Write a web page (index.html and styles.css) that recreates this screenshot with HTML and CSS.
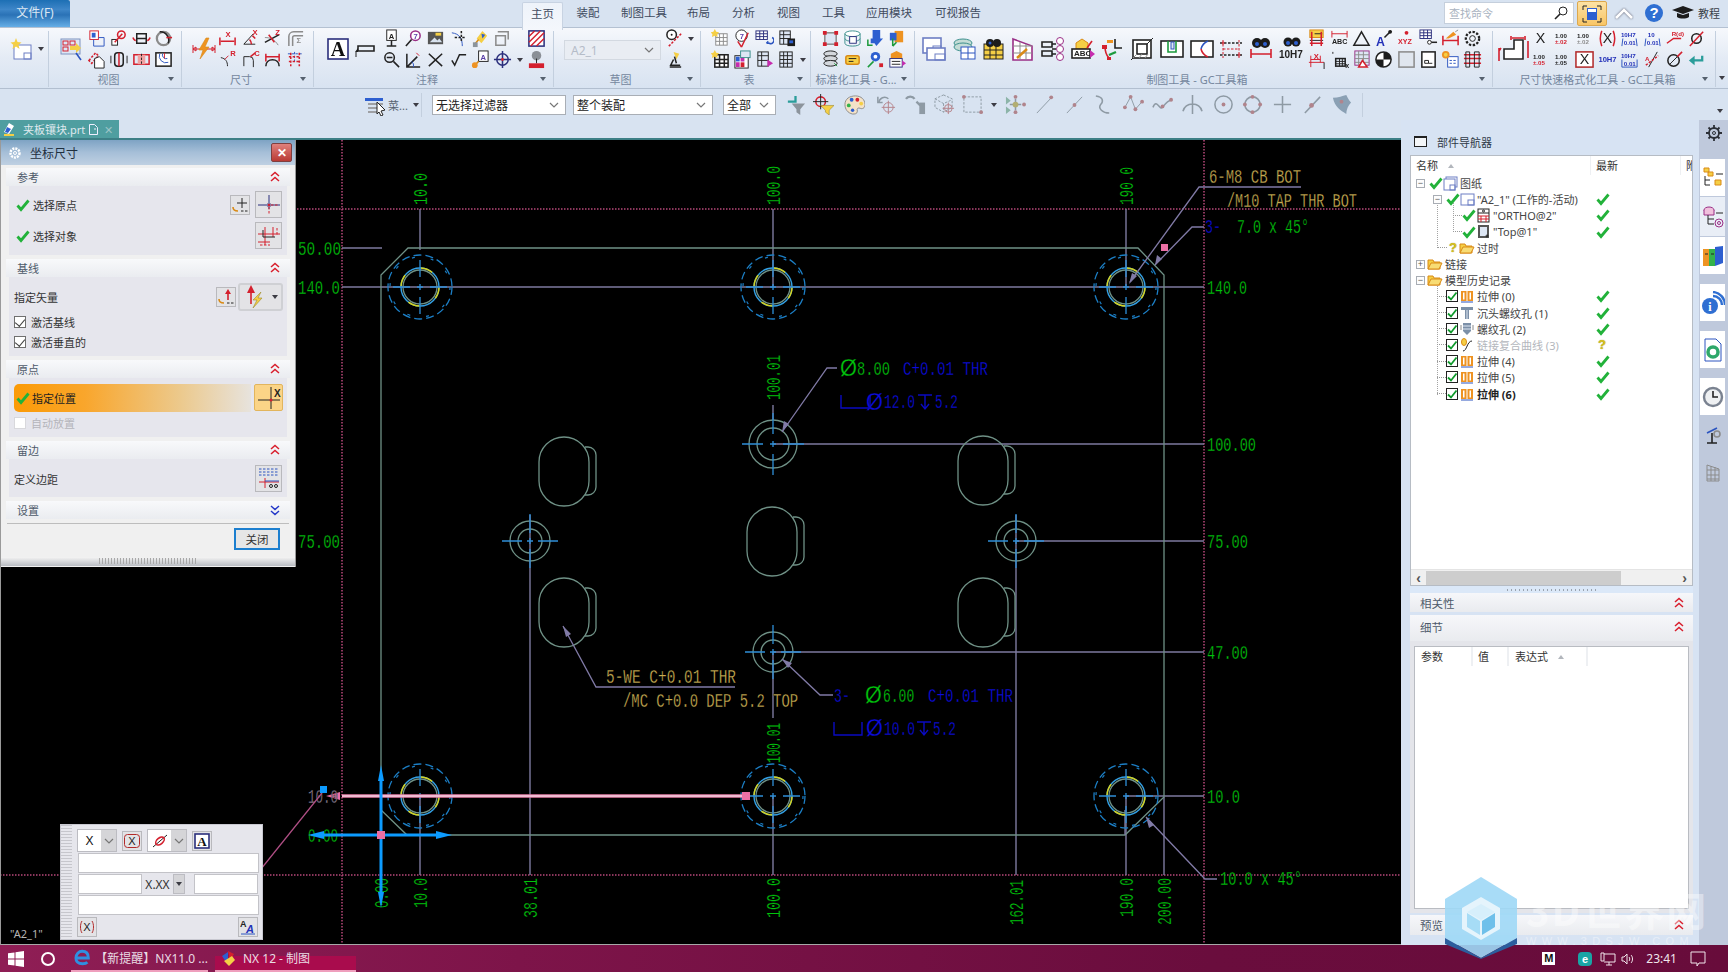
FILE: index.html
```html
<!DOCTYPE html>
<html lang="zh">
<head>
<meta charset="utf-8">
<title>NX 12 - 制图</title>
<link rel="stylesheet" href="styles.css">
</head>
<body>
<svg class="defs" width="0" height="0">
<defs>
<symbol id="chk" viewBox="0 0 14 14"><path class="chkp" d="M1.5 7.5 5 11.5 12.5 2.5"/></symbol>
<symbol id="cbx" viewBox="0 0 12 12"><rect class="k fw" x=".5" y=".5" width="11" height="11"/><path class="chkt" d="M2 6.5 5 9.5 10.5 2.5"/></symbol>
<symbol id="fold" viewBox="0 0 16 14"><path class="o fy" d="M1 12V3h5l1 2h6v7z"/><path class="o fo2" d="M1 12 4 6h11l-3 6z"/></symbol>
<symbol id="ext" viewBox="0 0 14 14"><path class="fo" d="M1 2h5.500v10H1zM7.500 2H13v10H7.500z"/><path class="fw" d="M3 3.500h1.500v7H3zM9.500 3.500H11v7H9.500z"/><path class="b" d="M1 13h12"/></symbol>
<symbol id="ddn" viewBox="0 0 10 10"><path class="chv" d="M1 3l4 4 4-4"/></symbol>
<symbol id="cup" viewBox="0 0 10 12"><path class="cr" d="M1 5 5 1.500 9 5M1 10 5 6.500 9 10"/></symbol>
<symbol id="cdn" viewBox="0 0 10 12"><path class="cb2" d="M1 2 5 5.500 9 2M1 7 5 10.500 9 7"/></symbol>
<g id="hb">
<circle class="dash1" r="32"/><circle class="dash2" r="30"/>
<circle class="ring-b" r="19"/><circle class="ring-y" r="19"/><circle class="ring-g" r="17"/>
<path class="cl" d="M-27 0H-10M-3 0H3M10 0H27M0 -27V-10M0 -3V3M0 10V27"/>
</g>
<g id="hm"><circle class="ring-g" r="24"/><circle class="ring-g" r="16"/><path class="cl" d="M-31 0H-10M-3 0H3M10 0H31M0 -31V-10M0 -3V3M0 10V31"/></g>
<g id="hs"><circle class="ring-g" r="20"/><circle class="ring-g" r="12"/><path class="cl" d="M-28 0H-8M-3 0H3M8 0H28M0 -27V-8M0 -3V3M0 8V27"/></g>
<g id="pk"><rect class="ring-g" width="50" height="69" rx="25" ry="25"/><path class="ring-g" d="M46 10h3a8 8 0 0 1 8 8v32a8 8 0 0 1-8 8h-3"/></g>
</defs>
</svg>

<header class="tabs">
  <div class="filebtn">文件(F)</div>
  <nav class="tablist">
    <span class="tab on">主页</span><span class="tab t1">装配</span><span class="tab t2">制图工具</span><span class="tab t3">布局</span><span class="tab t3">分析</span><span class="tab t3">视图</span><span class="tab t3">工具</span><span class="tab t4">应用模块</span><span class="tab t4">可视报告</span>
  </nav>
  <div class="search"><span>查找命令</span><svg width="16" height="16" viewBox="0 0 16 16"><circle class="k" cx="10" cy="6" r="4"/><path class="k w2" d="M7 9 2 14"/></svg></div>
  <div class="fullbtn"><svg width="20" height="18" viewBox="0 0 20 18"><rect class="fb" x="5" y="3" width="10" height="12"/><rect class="fw" x="6" y="4" width="8" height="3"/><path class="k" d="M1 5V1h4M15 1h4v4M19 13v4h-4M5 17H1v-4"/></svg></div>
  <svg class="cupw" width="20" height="14" viewBox="0 0 20 14"><path class="whitech" d="M2 11 10 3l8 8"/></svg>
  <svg class="help" width="20" height="20" viewBox="0 0 20 20"><circle class="fb2" cx="10" cy="10" r="9"/><text class="helpq" x="10" y="15">?</text></svg>
  <svg class="cap" width="22" height="14" viewBox="0 0 22 14"><path class="fk" d="M0 4 11 0l11 4-11 4zM5 7v4c3 2 9 2 12 0V7l-6 2z"/></svg>
  <span class="jc">教程</span>
</header>

<section class="ribbon">
  <div class="grp g-new"><div class="ics">
    <svg class="big" viewBox="0 0 24 24"><rect class="n fw" x="4" y="8" width="17" height="14"/><rect class="n" x="14" y="16" width="7" height="6"/><path class="fy" d="M6 1l1.500 4 4 .5-3 2.500 1 4-3.500-2.500-3.500 2.500 1-4-3-2.500 4-.5z"/></svg><i class="dd big-dd"></i>
  </div><div class="lbl"></div></div>

  <div class="grp g-view"><div class="ics">
    <svg class="big" viewBox="0 0 24 24"><rect class="l fl" x="1" y="2" width="19" height="15"/><rect class="r" x="3" y="4" width="5" height="4"/><rect class="r" x="10" y="4" width="5" height="4"/><rect class="r" x="3" y="10" width="5" height="4"/><path class="fy" d="M10 9h6v-3l5 5-5 5v-3h-6z"/><path class="b w2" d="M16 16l5 7"/></svg>
    <svg viewBox="0 0 20 20"><rect class="r fw" x="3" y="2" width="9" height="9"/><rect class="fb" x="5" y="4" width="4" height="5"/><path class="b" d="M12 9h6v9H7v-7"/></svg>
    <svg viewBox="0 0 20 20"><rect class="k fw" x="3" y="11" width="6" height="6"/><circle class="r w2" cx="13" cy="6" r="4"/><path class="r w2" d="M6 14 14 5"/></svg>
    <svg viewBox="0 0 20 20"><path class="k w2" d="M5 5h10v10H5zM5 10h10"/><path class="r w2" d="M1 9c1 3 2 3 3 3M19 9c-1 3-2 3-3 3"/></svg>
    <svg viewBox="0 0 20 20"><circle class="g w3" cx="10" cy="10" r="7"/><path class="k w2" d="M6 3a9 9 0 0 1 9 12"/><path class="r w2" d="M13 9h6"/></svg>
    <svg viewBox="0 0 20 20"><path class="r w2 dsh" d="M2 11 9 3l3 3-7 8z"/><path class="k fw" d="M8 9l5-2 5 5v7H8z"/></svg>
    <svg viewBox="0 0 20 20"><rect class="k w2" x="6" y="3" width="9" height="14" rx="3"/><path class="k" d="M2 6v8M19 6v8"/><path class="r w2" d="M10.500 3v14"/></svg>
    <svg viewBox="0 0 20 20"><rect class="r w2" x="2" y="5" width="16" height="10"/><path class="fr2" d="M6 5h8v10H6z"/><path class="k dsh" d="M10 4v12"/></svg>
    <svg viewBox="0 0 20 20"><rect class="k w2 fw" x="2" y="3" width="16" height="14"/><path class="b" d="M6 4a7 7 0 0 0 9 9M9 4a4 4 0 0 0 5 5"/><path class="r" d="M11 3v6"/></svg>
  </div><div class="lbl"><span>视图</span><i class="dd"></i></div></div>

  <div class="grp g-dim"><div class="ics">
    <svg class="big" viewBox="0 0 24 24"><path class="r" d="M1 8v8M23 8v8M1 12h22M1 12l3-2v4zM23 12l-3-2v4z"/><path class="fo sk" d="M14 1 7 13h4l-3 9 9-12h-4l4-9z"/></svg>
    <svg viewBox="0 0 20 20"><path class="r w2" d="M2 9v8M18 9v8M3 13h14"/><text class="it r-t" x="8" y="8">X</text></svg>
    <svg viewBox="0 0 20 20"><path class="k" d="M3 16 13 5M3 16h12"/><path class="r w2" d="M12 7l3 3M9 11a7 7 0 0 1 2 5"/><text class="it r-t" x="12" y="6">X</text></svg>
    <svg viewBox="0 0 20 20"><path class="k w2" d="M2 14 17 6"/><path class="g" d="M2 9c6 0 10 2 14 8"/><path class="r w2" d="M6 6l6 8"/><text class="it r-t" x="13" y="6">Z</text></svg>
    <svg viewBox="0 0 20 20"><path class="g w2" d="M3 18V8a5 5 0 0 1 5-5h10M7 18V9a2 2 0 0 1 2-2h9"/><text class="it g-t" x="11" y="15">Σ</text></svg>
    <svg viewBox="0 0 20 20"><path class="k" d="M3 8c5 1 7 4 7 9"/><path class="r" d="M7 10l4-4"/><text class="it r-t" x="13" y="6">R</text></svg>
    <svg viewBox="0 0 20 20"><path class="k" d="M3 7h6a4 4 0 0 1 4 4v7M3 7v10"/><path class="r w2" d="M10 7l5-4"/><text class="it r-t" x="14" y="6">C</text></svg>
    <svg viewBox="0 0 20 20"><path class="k w2" d="M3 17c0-9 14-9 14 0"/><path class="r w2" d="M3 4v8M17 4v8M3 7h14"/></svg>
    <svg viewBox="0 0 20 20"><path class="b dsh" d="M2 4h16M9 2v12"/><path class="r w2 dsh" d="M3 7h12M3 12h12M5 3v14M14 3v14"/></svg>
  </div><div class="lbl"><span>尺寸</span><i class="dd"></i></div></div>

  <div class="grp g-note"><div class="ics">
    <svg class="big" viewBox="0 0 24 24"><rect class="nv w2 fw" x="2" y="2" width="20" height="20"/><text class="bigA" x="12" y="19">A</text></svg>
    <svg class="big" viewBox="0 0 24 24"><path class="k w2" d="M5 9h16v5H5z"/><path class="fk" d="M2 15l3-4v4z"/><path class="k" d="M3 15v5"/></svg>
    <svg viewBox="0 0 20 20"><rect class="k fw" x="5" y="1" width="10" height="11"/><text class="it k-t" x="7" y="10">A</text><path class="k w2" d="M10 12v5M5 18h10"/></svg>
    <svg viewBox="0 0 20 20"><circle class="v w2 fw" cx="12" cy="7" r="5"/><text class="it v-t" x="10" y="10">7</text><path class="k w2" d="M8 11 2 18"/></svg>
    <svg viewBox="0 0 20 20"><rect class="fk2" x="2" y="3" width="16" height="13"/><path class="fy" d="M10 4h6v3h-6z"/><path class="fl2" d="M4 14l5-5 3 3 2-2 3 4z"/></svg>
    <svg viewBox="0 0 20 20"><path class="b" d="M3 4c8 1 11 6 11 14"/><path class="k w2 dsh" d="M6 9h12M13 2v12"/></svg>
    <svg viewBox="0 0 20 20"><path class="fy" d="M6 10l6-8 5 5-6 8z"/><path class="fb" d="M11 5l4 1-3 4z"/><path class="or w2" d="M3 17l5-6"/><path class="fg2" d="M2 14h5v5H2z"/></svg>
    <svg viewBox="0 0 20 20"><path class="g w2" d="M5 3h11v8M3 7h10v10H3z"/></svg>
    <i class="blank"></i>
    <svg viewBox="0 0 20 20"><rect class="nv w2 fw" x="2" y="2" width="16" height="16"/><path class="hat" d="M2 8 8 2M2 14 14 2M4 18 18 4M10 18l8-8"/></svg>
    <svg viewBox="0 0 20 20"><circle class="k w2" cx="8" cy="8" r="5"/><path class="k w2" d="M12 12l6 6M5 8h6"/></svg>
    <svg viewBox="0 0 20 20"><path class="k w2" d="M3 4v14h14M3 18 14 7"/><path class="b" d="M8 12a6 6 0 0 1 2 6"/><path class="r" d="M13 3l3 3"/></svg>
    <svg viewBox="0 0 20 20"><path class="k w2" d="M3 4l14 13M17 4 3 17"/></svg>
    <svg viewBox="0 0 20 20"><path class="k w2" d="M3 11l3 5 5-11h7"/></svg>
    <svg viewBox="0 0 20 20"><rect class="k fw" x="8" y="1" width="10" height="11"/><text class="it v-t" x="10" y="10">A</text><path class="or w2" d="M2 18l6-6"/><circle class="fo" cx="4" cy="16" r="3"/></svg>
    <svg viewBox="0 0 20 20"><circle class="nv w2" cx="10" cy="10" r="6"/><path class="nv w2" d="M1 10h18M10 1v18"/><circle class="fr" cx="10" cy="10" r="1.500"/></svg>
    <i class="dd"></i>
    <svg viewBox="0 0 20 20"><circle class="fg3" cx="10" cy="6" r="5"/><path class="k" d="M10 9v5"/><path class="fr" d="M2 14h16v5H2z"/></svg>
  </div><div class="lbl"><span>注释</span><i class="dd"></i></div></div>

  <div class="grp g-sk"><div class="ics">
    <div class="combo"><span>A2_1</span><svg width="10" height="10"><use href="#ddn"/></svg></div>
    <svg viewBox="0 0 20 20"><circle class="k w2 fw" cx="7" cy="6" r="5"/><circle class="fk" cx="7" cy="6" r="1"/><path class="r w2 dsh" d="M4 18 17 5"/></svg><i class="dd"></i>
    <svg viewBox="0 0 20 20"><path class="fy" d="M9 2l6 2-3 6z"/><path class="k w2" d="M9 10l-3 6h10M5 18h12M10 7l2 7"/></svg><i class="blank"></i>
  </div><div class="lbl"><span>草图</span><i class="dd"></i></div></div>

  <div class="grp g-tb"><div class="ics">
    <svg viewBox="0 0 20 20"><rect class="g fw" x="5" y="5" width="12" height="12"/><path class="g" d="M5 9h12M5 13h12M9 5v12M13 5v12"/><path class="fy" d="M4 0l1.500 3 3 .5-2 2 .5 3-3-1.500-3 1.500.5-3-2-2 3-.5z"/></svg>
    <svg viewBox="0 0 20 20"><circle class="k fw" cx="9" cy="7" r="6"/><text class="it v-t" x="7" y="10">7</text><path class="r w2" d="M9 19 16 4M9 19l-4-6"/></svg>
    <svg viewBox="0 0 20 20"><rect class="nv fw" x="1" y="2" width="12" height="9"/><path class="nv" d="M1 5h12M1 8h12M5 2v9M9 2v9"/><path class="b w2" d="M18 9a3 3 0 0 1-3 6h-3M12 15l2-2"/></svg>
    <svg viewBox="0 0 20 20"><rect class="k fl" x="3" y="2" width="11" height="14"/><path class="k" d="M3 6h11M3 10h11M7 2v14"/><rect class="fk" x="11" y="10" width="8" height="8"/><rect class="fb" x="13" y="12" width="4" height="3"/></svg>
    <i class="blank"></i>
    <svg viewBox="0 0 20 20"><rect class="k w2 fw" x="4" y="5" width="14" height="13"/><path class="k w2" d="M4 10h14M4 14h14M9 5v13M14 5v13"/><path class="fy" d="M4 0l1.500 3 3 .5-2 2 .5 3-3-1.500-3 1.500.5-3-2-2 3-.5z"/></svg>
    <svg viewBox="0 0 20 20"><rect class="k fw" x="2" y="6" width="14" height="13"/><path class="fb" d="M3 7h4v5H3z"/><path class="fr" d="M8 13h4v5H8z"/><path class="fp" d="M3 13h4v5H3zM8 7h4v5H8z"/><rect class="t fl" x="8" y="1" width="10" height="7"/></svg>
    <svg viewBox="0 0 20 20"><rect class="k fl" x="3" y="2" width="11" height="15"/><path class="k" d="M3 6h11M3 11h11M7 2v15"/><path class="fp" d="M13 10l6 4-6 4z"/></svg>
    <svg viewBox="0 0 20 20"><rect class="k fl" x="3" y="2" width="13" height="16"/><path class="k" d="M3 6h13M3 10h13M3 14h13M7 2v16M11 2v16"/></svg>
    <i class="dd"></i>
  </div><div class="lbl"><span>表</span><i class="dd"></i></div></div>

  <div class="grp g-st"><div class="ics">
    <svg viewBox="0 0 20 20"><rect class="g w2 fl" x="4" y="4" width="12" height="12"/><path class="fr" d="M2 2h4v4H2zM14 2h4v4h-4zM2 14h4v4H2zM14 14h4v4h-4z"/></svg>
    <svg viewBox="0 0 20 20"><ellipse class="t fw" cx="10" cy="5" rx="8" ry="3"/><path class="t" d="M2 5v10c0 4 16 4 16 0V5M2 10c0 4 16 4 16 0"/><rect class="nv fw" x="7" y="8" width="7" height="7"/></svg>
    <svg viewBox="0 0 20 20"><path class="fb" d="M8 1h8v9h3l-7 8-2-3H6v-5h2z"/><path class="gn w2" d="M3 11v6h5"/></svg>
    <svg viewBox="0 0 20 20"><path class="fo" d="M8 2h9v12H8z"/><path class="fb" d="M3 4h7v8H3z"/><path class="gn w2" d="M6 10v8M6 18l4-4"/></svg>
    <svg viewBox="0 0 20 20"><ellipse class="k fg4" cx="10" cy="4" rx="7" ry="3"/><ellipse class="k fg4" cx="10" cy="9" rx="7" ry="3"/><ellipse class="k fg4" cx="10" cy="14" rx="7" ry="3"/><path class="gn" d="M14 14l3 3"/></svg>
    <svg viewBox="0 0 20 20"><rect class="or w2 fy" x="3" y="6" width="14" height="9" rx="2"/><path class="k" d="M6 9h8M6 12h5"/></svg>
    <svg viewBox="0 0 20 20"><path class="gn w2" d="M3 18l6-6"/><circle class="fb" cx="11" cy="7" r="5"/><circle class="fw" cx="11" cy="7" r="2"/><path class="fr" d="M15 14h4v4h-4z"/></svg>
    <svg viewBox="0 0 20 20"><path class="fo" d="M4 4l6-3 6 3v5H4z"/><rect class="nv fw" x="3" y="9" width="13" height="9"/><path class="k" d="M5 12h9M5 15h9"/><path class="fp" d="M16 11l4 3-4 3z"/></svg>
  </div><div class="lbl"><span>标准化工具 - G...</span><i class="dd"></i></div></div>

  <div class="grp g-gc"><div class="ics">
    <svg class="big" viewBox="0 0 24 24"><rect class="n w2 fw" x="1" y="1" width="18" height="15"/><rect class="n" x="11" y="9" width="8" height="7"/><rect class="n w2 fw" x="5" y="11" width="18" height="12"/><rect class="n" x="13" y="17" width="10" height="6"/></svg>
    <svg class="big" viewBox="0 0 24 24"><ellipse class="t fg5" cx="11" cy="6" rx="9" ry="4"/><ellipse class="t fg5" cx="11" cy="10" rx="9" ry="4"/><rect class="b fw" x="9" y="10" width="14" height="12"/><path class="b" d="M9 16h14M16 10v12"/></svg>
    <svg class="big" viewBox="0 0 24 24"><rect class="k fy" x="3" y="7" width="19" height="15"/><path class="k" d="M3 13h19M3 18h19M9 7v15M15 7v15"/><circle class="fk" cx="9" cy="6" r="4"/><circle class="fk" cx="16" cy="6" r="4"/><circle class="fb" cx="9" cy="6" r="1.500"/></svg>
    <svg class="big" viewBox="0 0 24 24"><path class="v w2 fw" d="M2 2l19 7v14H2z"/><path class="g" d="M2 9h19M2 16h19M9 5v18M15 7v16"/><path class="or w3" d="M6 21l10-9"/></svg>
    <svg class="big" viewBox="0 0 24 24"><path class="k w2" d="M1 5h10v5H1zM1 14h10v5H1zM11 7h4M11 12h4M11 17h4"/><circle class="v fw" cx="19" cy="4" r="3.500"/><circle class="v fw" cx="19" cy="12" r="3.500"/><circle class="v fw" cx="19" cy="20" r="3.500"/></svg>
    <svg class="big" viewBox="0 0 24 24"><path class="or fy" d="M5 6l6-4 6 4v6H5z"/><rect class="k w2 fw" x="1" y="12" width="18" height="9"/><text class="it k-t" x="3" y="19">ABC</text><path class="fp" d="M19 13l5 4-5 4z"/><path class="r w2" d="M16 11l5-7"/></svg>
    <svg class="big" viewBox="0 0 24 24"><path class="r w2" d="M5 9c0 6 1 9 4 12"/><path class="k w2" d="M15 2v9h7"/><path class="fo" d="M7 3h6v3H7z"/><path class="gn w3" d="M9 18l7-3"/><path class="fr" d="M2 8h5v4H2zM7 20h4v3H7z"/></svg>
    <svg class="big" viewBox="0 0 24 24"><rect class="k w2 fw" x="3" y="3" width="18" height="18"/><path class="k" d="M1 23 23 1" /><rect class="k w2 fw" x="7" y="7" width="10" height="10"/><path class="g" d="M3 21l4-4M9 21l3-4M15 21l3-4"/></svg>
    <svg class="big" viewBox="0 0 24 24"><rect class="k w2 fw" x="1" y="4" width="22" height="16"/><path class="gn w2" d="M8 4v11h8V4"/><rect class="b fl" x="11" y="5" width="3" height="7"/></svg>
    <svg class="big" viewBox="0 0 24 24"><rect class="k w2 fw" x="1" y="4" width="22" height="16"/><path class="b w2" d="M18 4a12 12 0 0 0-7 8"/><path class="r w2" d="M11 12a12 12 0 0 0 7 8"/></svg>
    <svg class="big" viewBox="0 0 24 24"><path class="r dsh" d="M4 3v18M20 3v18M4 12h16"/><path class="k w2 dsh" d="M1 6h22M1 18h22"/><circle class="r" cx="4" cy="6" r="1"/><circle class="r" cx="20" cy="18" r="1"/></svg>
    <svg class="big" viewBox="0 0 24 24"><circle class="fk" cx="8" cy="6" r="5"/><circle class="fk" cx="16" cy="6" r="5"/><circle class="fb" cx="8" cy="7" r="2"/><circle class="fb" cx="16" cy="7" r="2"/><path class="r w2" d="M2 12v9M22 12v9M2 17h20"/></svg>
    <svg class="big" viewBox="0 0 24 24"><circle class="fk" cx="9" cy="5" r="4.500"/><circle class="fk" cx="17" cy="5" r="4.500"/><circle class="fb" cx="9" cy="6" r="2"/><circle class="fb" cx="17" cy="6" r="2"/><text class="txt10" x="0" y="21">10H7</text></svg>
    <svg viewBox="0 0 20 20"><rect class="or fy" x="3" y="1" width="14" height="8"/><path class="k" d="M3 12h14M8 5h8"/><path class="r w2" d="M5 3v15M15 3v15M3 15h14"/></svg>
    <svg viewBox="0 0 20 20"><path class="r" d="M2 2v7M18 2v7M2 5h16"/><text class="tiny k-t" x="2" y="16">ABC</text></svg>
    <svg viewBox="0 0 20 20"><path class="k w2" d="M10 3 18 17H2z"/></svg>
    <svg viewBox="0 0 20 20"><path class="k w2" d="M11 9 18 2"/><circle class="fk" cx="17" cy="3" r="2"/><text class="it2 b-t" x="2" y="18">A</text></svg>
    <svg viewBox="0 0 20 20"><circle class="fr" cx="10" cy="4" r="2"/><text class="tiny r-t" x="1" y="16">XYZ</text></svg>
    <svg viewBox="0 0 20 20"><rect class="nv fw" x="1" y="1" width="12" height="9"/><path class="nv" d="M1 4h12M1 7h12M5 1v9M9 1v9"/><path class="k w2" d="M12 14h7"/><circle class="k fw" cx="11" cy="14" r="2"/></svg>
    <svg viewBox="0 0 20 20"><path class="r w2" d="M2 7v10M18 7v10M2 12h16"/><path class="fo" d="M5 10l8-7 3 3-8 4z"/><path class="g" d="M15 3l3-2"/></svg>
    <svg viewBox="0 0 20 20"><circle class="k w3 dsh2" cx="10" cy="10" r="7"/><circle class="k" cx="10" cy="10" r="3"/></svg>
    <svg viewBox="0 0 20 20"><path class="r" d="M4 6v12M2 13h16M14 6v7M4 10h10"/><path class="k" d="M18 13v7"/><text class="it r-t" x="7" y="9">X</text></svg>
    <svg viewBox="0 0 20 20"><rect class="k w2" x="6" y="9" width="10" height="8"/><path class="k" d="M6 12h10M6 14.500h10M10 9v8M13 9v8"/><path class="k" d="M3 2v2"/><text class="tiny k-t" x="16" y="19">x</text></svg>
    <svg viewBox="0 0 20 20"><rect class="v fl" x="3" y="1" width="15" height="15"/><path class="g" d="M3 5h15M3 9h15M3 13h15M7 1v15M12 1v15"/><path class="r w2 fw" d="M11 11l5 7H7z"/></svg>
    <svg viewBox="0 0 20 20"><circle class="k w2 fw" cx="10" cy="10" r="8"/><path class="fk" d="M10 2a8 8 0 0 1 8 8h-8zM10 18a8 8 0 0 1-8-8h8z"/></svg>
    <svg viewBox="0 0 20 20"><rect class="g w2 fl2b" x="2" y="2" width="16" height="16"/></svg>
    <svg viewBox="0 0 20 20"><rect class="k w2 fw" x="3" y="2" width="14" height="16"/><path class="k" d="M6 11h4v3h-4z"/><path class="k" d="M10 14h4"/></svg>
    <svg viewBox="0 0 20 20"><rect class="b fw" x="7" y="7" width="11" height="11"/><path class="b dsh" d="M9 11h7M9 14h7"/><circle class="fo" cx="5" cy="5" r="4"/><circle class="fy" cx="5" cy="5" r="2"/></svg>
    <svg viewBox="0 0 20 20"><path class="r w2" d="M1 9h18M1 5h18M1 14h18"/><path class="k" d="M3 2v16h4V2zM12 2v16h5V2z"/></svg>
  </div><div class="lbl"><span>制图工具 - GC工具箱</span><i class="dd"></i></div></div>

  <div class="grp g-fa"><div class="ics">
    <svg class="big fa0" viewBox="0 0 32 32"><path class="k w2 fw" d="M6 16h10V7h9v19H6z"/><path class="r w2" d="M1 15v13M13 3v4M27 3v4M14 5h12M3 15l-2 3M30 8v17"/></svg>
    <svg viewBox="0 0 20 20"><text class="x-t k-t" x="10" y="15">X</text></svg>
    <svg viewBox="0 0 20 20"><text class="nm k-t" x="2" y="9">1.00</text><text class="nm r-t" x="2" y="16">±.02</text></svg>
    <svg viewBox="0 0 20 20"><text class="nm k-t" x="2" y="9">1.00</text><text class="nm g-t" x="2" y="16">±.02</text></svg>
    <svg viewBox="0 0 20 20"><path class="r w2" d="M4 2C2 7 2 13 4 18M16 2c2 5 2 11 0 16"/><text class="x-t k-t" x="10" y="15">X</text></svg>
    <svg viewBox="0 0 20 20"><text class="nm b-t" x="1" y="8">10H7</text><path class="b" d="M3 10 2 18M17 10l1 8"/><text class="nm b-t" x="4" y="17">0.01</text></svg>
    <svg viewBox="0 0 20 20"><text class="nm b-t" x="5" y="8">10</text><path class="b" d="M3 10 2 18M17 10l1 8"/><text class="nm b-t" x="4" y="17">0.01</text></svg>
    <svg viewBox="0 0 20 20"><text class="nm r-t" x="7" y="7">R(d)</text><path class="r w2" d="M2 15 9 10h8"/></svg>
    <svg viewBox="0 0 20 20"><circle class="k w2" cx="10" cy="10" r="5"/><path class="r w2" d="M3 18 17 3"/></svg>
    <svg viewBox="0 0 20 20"><text class="nm k-t" x="2" y="9">1.00</text><text class="nm r-t" x="2" y="16">±.05</text></svg>
    <svg viewBox="0 0 20 20"><text class="nm k-t" x="2" y="9">1.00</text><text class="nm k-t" x="2" y="16">±.05</text></svg>
    <svg viewBox="0 0 20 20"><rect class="br w2 fw" x="1" y="2" width="18" height="16"/><text class="x-t k-t" x="10" y="15">X</text></svg>
    <svg viewBox="0 0 20 20"><text class="nm2 b-t" x="10" y="13">10H7</text></svg>
    <svg viewBox="0 0 20 20"><text class="nm b-t" x="1" y="8">10H7</text><path class="b" d="M2 10v8h16v-8"/><text class="nm b-t" x="4" y="17">0.01</text></svg>
    <svg viewBox="0 0 20 20"><path class="k" d="M15 2 6 18"/><path class="r w2 dsh" d="M3 16 16 6"/><text class="nm r-t" x="2" y="12">A</text></svg>
    <svg viewBox="0 0 20 20"><circle class="k w2" cx="9" cy="11" r="6"/><path class="k" d="M5 15l8-8"/><path class="r w2" d="M13 7l5-5"/></svg>
    <svg viewBox="0 0 20 20"><path class="tl w3" d="M16 6v5H6"/><path class="ftl" d="M8 6v10l-6-5z"/></svg>
  </div><div class="lbl"><span>尺寸快速格式化工具 - GC工具箱</span><i class="dd"></i></div></div>
  <div class="g-end"><i class="dd"></i></div>
</section>

<section class="filterbar">
  <div class="menubtn"><svg width="22" height="22" viewBox="0 0 22 22"><path class="fb" d="M1 4h18v3H1z"/><path class="g w2" d="M4 10h15M4 14h10M4 18h10"/><path class="k fw" d="M13 8l8 8-4 1 2 4-2 1-2-4-2 2z"/></svg><span>菜...</span><i class="dd"></i></div>
  <div class="sel s1"><span>无选择过滤器</span><svg width="10" height="10"><use href="#ddn"/></svg></div>
  <div class="sel s2"><span>整个装配</span><svg width="10" height="10"><use href="#ddn"/></svg></div>
  <div class="sel s3"><span>全部</span><svg width="10" height="10"><use href="#ddn"/></svg></div>
  <div class="fic">
    <svg viewBox="0 0 22 22"><path class="fg2" d="M7 10h14l-5 6v6l-4-3v-3z"/><path class="tl w3" d="M3 8h8V2"/></svg>
    <svg viewBox="0 0 22 22"><circle class="r w2" cx="8" cy="8" r="5"/><path class="k" d="M8 0v16M0 8h16"/><path class="fy sk2" d="M8 12h14l-5 5v5l-4-3v-2z"/></svg>
    <svg viewBox="0 0 22 22"><path class="g fpal" d="M1 11C1 5 6 2 12 2c6 0 10 4 10 9 0 4-3 5-5 4s-4 0-3 3c0 3-3 3-5 3-5-1-8-5-8-10z"/><circle class="fb" cx="8" cy="6" r="2"/><circle class="fr" cx="14" cy="6" r="2"/><circle class="fy" cx="18" cy="10" r="2"/><circle class="gnf" cx="5" cy="12" r="2"/><circle class="fb" cx="9" cy="17" r="1.800"/></svg>
    <svg viewBox="0 0 22 22"><path class="g2 w2" d="M4 9a6 6 0 0 1 10-4"/><path class="g2 w2" d="M3 3v6h5"/><circle class="rp" cx="14" cy="14" r="5"/><path class="rp" d="M7 14h14M14 7v14"/></svg>
    <svg viewBox="0 0 22 22"><path class="g2 w3" d="M1 5c2-3 7-3 9 0"/><path class="g2 w3" d="M12 8l4 4"/><rect class="fg6" x="15" y="9" width="6" height="12"/></svg>
    <svg viewBox="0 0 22 22"><path class="g2 dsh" d="M10 1 19 5v9l-9 5-9-5V5zM1 5l9 5 9-4M10 10v9"/><circle class="rp" cx="15" cy="15" r="4"/><path class="rp" d="M9 15h12M15 9v12"/></svg>
    <svg viewBox="0 0 22 22"><rect class="g2 dsh" x="2" y="3" width="18" height="16"/><circle class="frp" cx="2" cy="3" r="2"/><circle class="frp" cx="20" cy="19" r="2"/></svg>
    <i class="dd"></i>
    <svg viewBox="0 0 22 22"><path class="g2 w2" d="M5 11h12M11 5v12"/><circle class="fg7" cx="11" cy="11" r="3"/><path class="ftl2" d="M1 3l5 4-5 4zM1 13l5 4-5 4z"/><circle class="frp" cx="11" cy="3" r="2"/><circle class="frp" cx="20" cy="11" r="2"/><circle class="frp" cx="11" cy="19" r="2"/></svg>
    <svg viewBox="0 0 22 22"><path class="g2" d="M3 20 19 3"/><circle class="frp" cx="18" cy="3.500" r="2"/></svg>
    <svg viewBox="0 0 22 22"><path class="g2" d="M3 20 19 3"/><circle class="frp" cx="11" cy="11.500" r="2"/></svg>
    <svg viewBox="0 0 22 22"><path class="g2 w2" d="M3 2c8 1 8 6 5 9-3 4 2 9 9 9"/></svg>
    <svg viewBox="0 0 22 22"><path class="g2" d="M2 14 8 3l5 13 7-8"/><circle class="frp" cx="8" cy="3" r="2"/><circle class="frp" cx="2" cy="14" r="2"/><circle class="frp" cx="13" cy="16" r="2"/><circle class="frp" cx="20" cy="8" r="2"/></svg>
    <svg viewBox="0 0 22 22"><path class="g2 w2" d="M1 14c4-10 7 4 10 0s5-7 10-8"/><circle class="frp" cx="11" cy="13" r="2"/><circle class="frp" cx="20" cy="6" r="2"/></svg>
    <svg viewBox="0 0 22 22"><path class="g2 w2" d="M1 18C4 8 18 8 21 18M11 1v20"/></svg>
    <svg viewBox="0 0 22 22"><circle class="g2 w2" cx="11" cy="11" r="9"/><circle class="frp" cx="11" cy="11" r="2"/></svg>
    <svg viewBox="0 0 22 22"><circle class="g2 w2" cx="11" cy="11" r="8"/><circle class="frp" cx="3" cy="11" r="2"/><circle class="frp" cx="19" cy="11" r="2"/><circle class="frp" cx="11" cy="3" r="2"/><circle class="frp" cx="11" cy="19" r="2"/></svg>
    <svg viewBox="0 0 22 22"><path class="g2 w2" d="M2 11h18M11 2v18"/></svg>
    <svg viewBox="0 0 22 22"><path class="g2 w2" d="M3 20 19 3"/><circle class="frp" cx="10" cy="12" r="2.500"/></svg>
    <svg viewBox="0 0 22 22"><path class="fg8" d="M2 4c6 0 10-2 14-3 2 4 4 7 5 8-3 3-5 8-5 12C10 17 4 14 2 4z"/><circle class="frp" cx="11" cy="8" r="2"/></svg>
  </div>
  <div class="fsep"></div>
  <i class="dd fend"></i>
</section>

<main class="work">
  <div class="left">
    <div class="docbar">
      <div class="doctab"><svg width="17" height="15" viewBox="0 0 17 15"><path class="fw" d="M6 1l5 3-5 8-5-2z"/><path class="fb" d="M4 5l4 2-3 4-3-1z"/><path class="fy" d="M1 12h10v2H1z"/></svg><span>夹板镶块.prt</span><svg width="11" height="13" viewBox="0 0 11 13"><path class="whs" d="M1.500 1.500h5l3 3v7h-8zM6 6h2"/></svg><span class="docx">✕</span></div>
    </div>
    <div class="canvas">
      <svg class="draw" width="1400" height="805" viewBox="0 140 1400 805">
        <path class="frame" d="M342 140V945M1204 140V945M0 209H1400M0 875H1400"/>
        <path class="ext" d="M420 209V250M773 209V287M1126 209V287M773 405V420M342 287H1204M342 248H382M773 444H1204M1016 541H1204M773 652H1204M1126 796H1204M420 796V875M773 796V875M1126 796V875M530 515V875M1016 515V875M1164 797V875M773 652V718"/>
        <path class="part" d="M408 248H1138L1164 275V797L1125 835H407L381 810V275Z"/>
        <path class="ext" d="M1125 810V835"/>
        <g class="pkts"><use href="#pk" x="539" y="437"/><use href="#pk" x="747" y="507"/><use href="#pk" x="958" y="436"/><use href="#pk" x="539" y="578"/><use href="#pk" x="958" y="578"/></g>
        <use href="#hb" x="420" y="287"/><use href="#hb" x="773" y="287"/><use href="#hb" x="1126" y="287"/><use href="#hb" x="420" y="796"/><use href="#hb" x="773" y="796"/><use href="#hb" x="1126" y="796"/>
        <use href="#hm" x="773" y="444"/><use href="#hs" x="773" y="652"/><use href="#hs" x="530" y="541"/><use href="#hs" x="1016" y="541"/>

        <path class="lead" d="M1301 187H1199L1130 282M1204 227H1192L1155 265M837 368H827L782 432M735 687H596L563 626M833 695H820L782 659M1217 879H1205L1146 817"/>
        <path class="ahead" d="M1129 284l3-11 5 3zM1155 265l2-10 5 4zM782 432l2-11 5 3zM563 626l8 8-5 3zM782 659l10 4-4 5zM1146 817l8 8-5 3z"/>

        <g class="gr">
          <text transform="translate(427 205) rotate(-90)" textLength="32" lengthAdjust="spacingAndGlyphs">10.0</text>
          <text transform="translate(780 205) rotate(-90)" textLength="39" lengthAdjust="spacingAndGlyphs">100.0</text>
          <text transform="translate(780 400) rotate(-90)" textLength="45" lengthAdjust="spacingAndGlyphs">100.01</text>
          <text transform="translate(1133 205) rotate(-90)" textLength="38" lengthAdjust="spacingAndGlyphs">190.0</text>
          <text transform="translate(427 908) rotate(-90)" textLength="30" lengthAdjust="spacingAndGlyphs">10.0</text>
          <text transform="translate(388 908) rotate(-90)" textLength="30" lengthAdjust="spacingAndGlyphs">0.00</text>
          <text transform="translate(537 918) rotate(-90)" textLength="40" lengthAdjust="spacingAndGlyphs">38.01</text>
          <text transform="translate(780 918) rotate(-90)" textLength="40" lengthAdjust="spacingAndGlyphs">100.0</text>
          <text transform="translate(780 763) rotate(-90)" textLength="40" lengthAdjust="spacingAndGlyphs">100.01</text>
          <text transform="translate(1023 925) rotate(-90)" textLength="45" lengthAdjust="spacingAndGlyphs">162.01</text>
          <text transform="translate(1133 917) rotate(-90)" textLength="39" lengthAdjust="spacingAndGlyphs">190.0</text>
          <text transform="translate(1171 925) rotate(-90)" textLength="47" lengthAdjust="spacingAndGlyphs">200.00</text>
          <text x="1207" y="294" textLength="40" lengthAdjust="spacingAndGlyphs">140.0</text>
          <text x="1207" y="451" textLength="49" lengthAdjust="spacingAndGlyphs">100.00</text>
          <text x="1207" y="548" textLength="41" lengthAdjust="spacingAndGlyphs">75.00</text>
          <text x="1207" y="659" textLength="41" lengthAdjust="spacingAndGlyphs">47.00</text>
          <text x="1207" y="803" textLength="33" lengthAdjust="spacingAndGlyphs">10.0</text>
          <text x="298" y="255" textLength="43" lengthAdjust="spacingAndGlyphs">50.00</text>
          <text x="298" y="294" textLength="42" lengthAdjust="spacingAndGlyphs">140.0</text>
          <text x="298" y="548" textLength="42" lengthAdjust="spacingAndGlyphs">75.00</text>
          <text x="308" y="842" textLength="30" lengthAdjust="spacingAndGlyphs">0.00</text>
          <text x="1237" y="233" textLength="72" lengthAdjust="spacingAndGlyphs">7.0 x 45°</text>
          <text x="1220" y="885" textLength="82" lengthAdjust="spacingAndGlyphs">10.0 x 45°</text>
          <text x="857" y="375" textLength="33" lengthAdjust="spacingAndGlyphs">8.00</text>
          <text transform="translate(883 702) scale(.62 1)">6.00</text>
          <text class="dia" x="840" y="376" textLength="17" lengthAdjust="spacingAndGlyphs">Ø</text>
          <text class="dia" transform="translate(865 703) scale(.9 1)">Ø</text>
        </g>
        <g class="go">
          <text x="1209" y="183" textLength="92" lengthAdjust="spacingAndGlyphs">6-M8 CB BOT</text>
          <text x="1227" y="207" textLength="130" lengthAdjust="spacingAndGlyphs">/M10 TAP THR BOT</text>
          <text x="606" y="683" textLength="130" lengthAdjust="spacingAndGlyphs">5-WE C+0.01 THR</text>
          <text transform="translate(623 707) scale(.662 1)">/MC C+0.0 DEP 5.2 TOP</text>
        </g>
        <g class="bl">
          <text x="1205" y="233" textLength="16" lengthAdjust="spacingAndGlyphs">3-</text>
          <text x="903" y="375" textLength="85" lengthAdjust="spacingAndGlyphs">C+0.01 THR</text>
          <text transform="translate(834 702) scale(.63 1)">3-</text>
          <text transform="translate(928 702) scale(.675 1)">C+0.01 THR</text>
          <text x="884" y="408" textLength="31" lengthAdjust="spacingAndGlyphs">12.0</text>
          <text x="935" y="408" textLength="23" lengthAdjust="spacingAndGlyphs">5.2</text>
          <text x="884" y="735" textLength="31" lengthAdjust="spacingAndGlyphs">10.0</text>
          <text x="933" y="735" textLength="23" lengthAdjust="spacingAndGlyphs">5.2</text>
          <text class="dia" x="866" y="410" textLength="17" lengthAdjust="spacingAndGlyphs">Ø</text>
          <text class="dia" x="866" y="736" textLength="17" lengthAdjust="spacingAndGlyphs">Ø</text>
        </g>
        <path class="bsym" d="M841 395V408H870V395M834 722V735H862V722M918 395H932M925 395V408M921 404L925 409 929 404M917 722H931M924 722V734M920 730L924 735 928 730"/>

        <path class="hi" d="M342 796H745"/>
        <path class="hi2" d="M342 796H745"/>
        <rect class="pinksq" x="742" y="792" width="8" height="8"/>
        <rect class="pinksq" x="1161" y="244" width="7" height="7"/>
        <path class="pinksq" d="M326 796 340 792V800Z"/>
        <text class="gry" x="308" y="803" textLength="30" lengthAdjust="spacingAndGlyphs">10.0</text>
        <path class="plink" d="M261 869 322 793"/>
        <rect class="bluesq" x="320" y="786" width="7" height="7"/>
        <path class="axis" d="M381 778V893M322 835H440"/>
        <path class="axh" d="M381 765l-3 16h6zM381 908l-3-16h6zM308 835l16-4v8zM452 835l-16-4v8z"/>
        <rect class="pinksq" x="377" y="831" width="8" height="8"/>
      </svg>
      <span class="sheetname">"A2_1"</span>

      <aside class="dlg">
        <div class="dlg-title"><svg width="14" height="14" viewBox="0 0 14 14"><circle class="gear" cx="7" cy="7" r="4.500"/><circle class="gear2" cx="7" cy="7" r="1.500"/></svg><span>坐标尺寸</span><button class="dlg-x">✕</button></div>
        <div class="sec-h"><span>参考</span><svg width="10" height="12"><use href="#cup"/></svg></div>
        <div class="sec-b b-ref">
          <div class="d-row h31"><svg class="c13" width="14" height="14"><use href="#chk"/></svg><span class="grow">选择原点</span>
            <span class="tbtn m"><svg width="18" height="18" viewBox="0 0 18 18"><path class="k" d="M11 2v10M6 7h10"/><path class="or w2" d="M2 11c0 3 2 4 5 4"/><path class="k dsh" d="M10 15h7"/></svg></span>
            <span class="tbtn l"><svg width="24" height="24" viewBox="0 0 24 24"><path class="nv" d="M12 2v14M1 12h22"/><circle class="fr" cx="12" cy="12" r="2"/><path class="r dsh" d="M14 12h8M12 14v8"/></svg></span></div>
          <div class="d-row h31"><svg class="c13" width="14" height="14"><use href="#chk"/></svg><span class="grow">选择对象</span>
            <span class="tbtn l"><svg width="24" height="24" viewBox="0 0 24 24"><path class="r" d="M1 10h22M8 3v18M16 3v10M1 18h12"/><path class="k" d="M6 6v7h12"/><path class="r dsh" d="M20 4v8M3 21h10"/></svg></span></div>
        </div>
        <div class="sec-h"><span>基线</span><svg width="10" height="12"><use href="#cup"/></svg></div>
        <div class="sec-b b-base">
          <div class="d-row h29 nopad"><span class="grow">指定矢量</span>
            <span class="tbtn m"><svg width="18" height="18" viewBox="0 0 18 18"><path class="r w2" d="M11 3v9"/><path class="fr" d="M11 1l-3 5h6z"/><path class="or w2" d="M2 11c0 3 2 4 5 4"/><path class="k dsh" d="M10 15h7"/></svg></span>
            <span class="tbtn split"><svg width="22" height="26" viewBox="0 0 22 26"><path class="r w2" d="M8 6v14"/><path class="fr" d="M8 1 4 9h8z"/><path class="fy sk2" d="M18 8l-8 8h4l-4 8 9-10h-4z"/></svg><i class="dd"></i></span></div>
          <label class="ck"><span class="bx on"></span>激活基线</label>
          <label class="ck"><span class="bx on"></span>激活垂直的</label>
        </div>
        <div class="sec-h"><span>原点</span><svg width="10" height="12"><use href="#cup"/></svg></div>
        <div class="sec-b b-org">
          <div class="d-row hl"><div class="pickbar"><svg width="14" height="14"><use href="#chk"/></svg><span>指定位置</span></div>
            <span class="tbtn pick"><svg width="24" height="24" viewBox="0 0 24 24"><path class="k" d="M1 14h22M14 1v22"/><circle class="fr" cx="14" cy="14" r="1.500"/><text class="pick-x" x="17" y="11">X</text></svg></span></div>
          <label class="ck off"><span class="bx"></span>自动放置</label>
        </div>
        <div class="sec-h"><span>留边</span><svg width="10" height="12"><use href="#cup"/></svg></div>
        <div class="sec-b b-marg">
          <div class="d-row nopad h28"><span class="grow">定义边距</span>
            <span class="tbtn l"><svg width="24" height="24" viewBox="0 0 24 24"><path class="b dsh" d="M2 3h20M2 6h20M2 9h20"/><path class="r" d="M8 12v10M2 16h20"/><path class="b" d="M8 15h14"/><circle class="k" cx="14" cy="20" r="1.500"/><circle class="k" cx="19" cy="20" r="1.500"/></svg></span></div>
        </div>
        <div class="sec-h"><span>设置</span><svg width="10" height="12"><use href="#cdn"/></svg></div>
        <div class="dlg-foot"><button class="closebtn">关闭</button></div>
        <div class="dlg-grip"></div>
      </aside>

      <aside class="tbox">
        <div class="grip"></div>
        <div class="tb-main">
          <div class="tb-r1">
            <span class="tcmb"><b>X</b><i><svg width="10" height="10"><use href="#ddn"/></svg></i></span>
            <span class="tbtn t20"><svg width="16" height="14" viewBox="0 0 16 14"><rect class="br" x=".5" y=".5" width="15" height="13" rx="3"/><text class="x-s" x="8" y="11">X</text></svg></span>
            <span class="tcmb"><b><svg width="18" height="16" viewBox="0 0 18 16"><path class="k" d="M2 14 16 2"/><ellipse class="r w2" cx="9" cy="8" rx="5" ry="3" transform="rotate(-40 9 8)"/></svg></b><i><svg width="10" height="10"><use href="#ddn"/></svg></i></span>
            <span class="tbtn t20"><svg width="16" height="16" viewBox="0 0 16 16"><rect class="nv w2 fw" x="1" y="1" width="14" height="14"/><text class="a-s" x="8" y="13">A</text></svg></span>
          </div>
          <div class="tinput"></div>
          <div class="tb-r3"><span class="tinput w64"></span><span class="prec">X.XX</span><i class="ddbtn"><i class="dd"></i></i><span class="tinput w64b"></span></div>
          <div class="tinput"></div>
          <div class="tb-r5">
            <span class="tbtn t20"><svg width="16" height="14" viewBox="0 0 16 14"><path class="br" d="M3 1C1 4 1 10 3 13M13 1c2 3 2 9 0 12"/><text class="x-s" x="8" y="11">X</text></svg></span>
            <span class="tbtn t20"><svg width="16" height="16" viewBox="0 0 16 16"><text class="a-x1" x="0" y="8">A</text><text class="a-x2" x="6" y="14">A</text><path class="b" d="M1 15h14"/></svg></span>
          </div>
        </div>
      </aside>
    </div>
  </div>

  <div class="nav">
    <div class="nav-head"><span class="nv-box"></span><span>部件导航器</span></div>
    <div class="tree">
      <div class="tree-cols"><span class="tc1">名称<i class="up"></i></span><span class="tc2">最新</span><span class="tc3">附</span></div>
      <div class="rows">
        <i class="vd v1"></i><i class="vd v2"></i><i class="vd v3"></i>
        <div class="row"><div class="nm-c i0"><i class="ex">−</i><svg class="ck14" width="14" height="14"><use href="#chk"/></svg><svg class="ic" width="15" height="15" viewBox="0 0 15 15"><rect class="n fw" x="3" y="1" width="11" height="10"/><rect class="n fw" x="1" y="3" width="11" height="11"/><rect class="n" x="7" y="9" width="5" height="5"/></svg><span>图纸</span></div></div>
        <div class="row"><div class="nm-c i1"><i class="ex">−</i><svg class="ck14" width="14" height="14"><use href="#chk"/></svg><svg class="ic" width="15" height="15" viewBox="0 0 15 15"><rect class="n fw" x="1" y="2" width="13" height="11"/><rect class="n" x="8" y="8" width="6" height="5"/></svg><span>"A2_1" (工作的-活动)</span></div><div class="lt"><svg width="14" height="14"><use href="#chk"/></svg></div></div>
        <div class="row"><div class="nm-c i2"><i class="dh"></i><svg class="ck14" width="14" height="14"><use href="#chk"/></svg><svg class="ic" width="15" height="15" viewBox="0 0 15 15"><rect class="k fw" x="2" y="1" width="11" height="13"/><path class="k" d="M2 5h11"/><circle class="k" cx="7.500" cy="3" r="1"/><path class="r" d="M2 8h11M2 11h11M5 8v6M10 8v6"/></svg><span>"ORTHO@2"</span></div><div class="lt"><svg width="14" height="14"><use href="#chk"/></svg></div></div>
        <div class="row"><div class="nm-c i2"><i class="dh"></i><svg class="ck14" width="14" height="14"><use href="#chk"/></svg><svg class="ic" width="15" height="15" viewBox="0 0 15 15"><rect class="fk2" x="2" y="1" width="11" height="13"/><rect class="fl" x="4" y="3" width="7" height="9"/><circle class="k" cx="11" cy="12" r="1"/></svg><span>"Top@1"</span></div><div class="lt"><svg width="14" height="14"><use href="#chk"/></svg></div></div>
        <div class="row"><div class="nm-c i3"><i class="dh"></i><span class="qm">?</span><svg class="ic" width="16" height="14"><use href="#fold"/></svg><span>过时</span></div></div>
        <div class="row"><div class="nm-c i0"><i class="ex ex2">+</i><svg class="ic" width="16" height="14"><use href="#fold"/></svg><span>链接</span></div></div>
        <div class="row"><div class="nm-c i0"><i class="ex ex2">−</i><svg class="ic" width="16" height="14"><use href="#fold"/></svg><span>模型历史记录</span></div></div>
        <div class="row"><div class="nm-c i4"><i class="dh"></i><svg class="cb12" width="12" height="12"><use href="#cbx"/></svg><svg class="ic" width="14" height="14"><use href="#ext"/></svg><span>拉伸 (0)</span></div><div class="lt"><svg width="14" height="14"><use href="#chk"/></svg></div></div>
        <div class="row"><div class="nm-c i4"><i class="dh"></i><svg class="cb12" width="12" height="12"><use href="#cbx"/></svg><svg class="ic" width="14" height="14" viewBox="0 0 14 14"><path class="fg9" d="M1 1h12v3H9v9H5V4H1z"/><path class="w-l" d="M7 4v9"/></svg><span>沉头螺纹孔 (1)</span></div><div class="lt"><svg width="14" height="14"><use href="#chk"/></svg></div></div>
        <div class="row"><div class="nm-c i4"><i class="dh"></i><svg class="cb12" width="12" height="12"><use href="#cbx"/></svg><svg class="ic" width="14" height="14" viewBox="0 0 14 14"><path class="fg9" d="M3 1h8v8l-4 4-4-4z"/><path class="g" d="M1 3v5M13 3v5"/><path class="w-l" d="M3 4h8M3 7h8"/></svg><span>螺纹孔 (2)</span></div><div class="lt"><svg width="14" height="14"><use href="#chk"/></svg></div></div>
        <div class="row dim"><div class="nm-c i4"><i class="dh"></i><svg class="cb12" width="12" height="12"><use href="#cbx"/></svg><svg class="ic" width="14" height="14" viewBox="0 0 14 14"><ellipse class="or fy" cx="4" cy="4" rx="2.500" ry="3.500"/><path class="k" d="M3 13c4 0 4-10 9-10"/></svg><span>链接复合曲线 (3)</span></div><div class="lt"><span class="qm">?</span></div></div>
        <div class="row"><div class="nm-c i4"><i class="dh"></i><svg class="cb12" width="12" height="12"><use href="#cbx"/></svg><svg class="ic" width="14" height="14"><use href="#ext"/></svg><span>拉伸 (4)</span></div><div class="lt"><svg width="14" height="14"><use href="#chk"/></svg></div></div>
        <div class="row"><div class="nm-c i4"><i class="dh"></i><svg class="cb12" width="12" height="12"><use href="#cbx"/></svg><svg class="ic" width="14" height="14"><use href="#ext"/></svg><span>拉伸 (5)</span></div><div class="lt"><svg width="14" height="14"><use href="#chk"/></svg></div></div>
        <div class="row bold"><div class="nm-c i4"><i class="dh"></i><svg class="cb12" width="12" height="12"><use href="#cbx"/></svg><svg class="ic" width="14" height="14"><use href="#ext"/></svg><span>拉伸 (6)</span></div><div class="lt"><svg width="14" height="14"><use href="#chk"/></svg></div></div>
      </div>
      <div class="hscroll"><span class="sa">‹</span><div class="track"><div class="thumb"></div></div><span class="sa">›</span></div>
    </div>
    <div class="resz"></div>
    <div class="nav-sec s-rel"><span>相关性</span><svg width="10" height="12"><use href="#cup"/></svg></div>
    <div class="nav-sec s-det"><span>细节</span><svg width="10" height="12"><use href="#cup"/></svg></div>
    <div class="detail">
      <div class="dt"><div class="dt-h"><span class="d1">参数</span><span class="d2">值</span><span class="d3">表达式<i class="up"></i></span></div></div>
    </div>
    <div class="nav-sec s-pre"><span>预览</span><svg width="10" height="12"><use href="#cup"/></svg></div>
  </div>

  <div class="side">
    <svg class="sgear" width="16" height="16" viewBox="0 0 16 16"><circle class="gear3" cx="8" cy="8" r="5"/><circle class="gear3b" cx="8" cy="8" r="1.500"/><path class="gear3" d="M8 0v3M8 13v3M0 8h3M13 8h3M2.500 2.500l2 2M11.500 11.500l2 2M2.500 13.500l2-2M11.500 4.500l2-2"/></svg>
    <div class="stab"><svg width="22" height="24" viewBox="0 0 22 24"><path class="fy or" d="M2 2h5v4H2zM6 6h5v4H6z"/><path class="k" d="M3 10v9h5M14 8h7M3 14h5"/><path class="fy or" d="M13 14h6v5h-6z"/></svg></div>
    <div class="stab act"><svg width="22" height="24" viewBox="0 0 22 24"><ellipse class="v fpk" cx="7" cy="5" rx="5" ry="3"/><path class="v fpk" d="M2 5v5h10V5"/><path class="k" d="M6 10v9h6M14 8h7M6 14h6"/><circle class="v" cx="17" cy="18" r="4"/><circle class="v" cx="17" cy="18" r="1.500"/></svg></div>
    <div class="stab"><svg width="22" height="24" viewBox="0 0 22 24"><path class="fo" d="M1 5h6v17H1z"/><path class="gnf" d="M7 5h6v17H7z"/><path class="fb" d="M13 3l8-1v17l-8 3z"/><path class="k" d="M3 10h3M9 10h3"/></svg></div>
    <div class="stab gap"><svg width="24" height="24" viewBox="0 0 24 24"><circle class="fb2" cx="9" cy="15" r="8"/><text class="itxt" x="9" y="20">i</text><path class="bl-s" d="M12 5a9 9 0 0 1 9 9M12 1a13 13 0 0 1 12 13"/></svg></div>
    <div class="stab gap"><svg width="20" height="24" viewBox="0 0 20 24"><path class="b fw" d="M2 1h11l5 5v17H2z"/><circle class="tl-r" cx="10" cy="14" r="5"/></svg></div>
    <div class="stab gap"><svg width="22" height="22" viewBox="0 0 22 22"><circle class="clk" cx="11" cy="11" r="9"/><path class="k w2" d="M11 5v6h5"/></svg></div>
    <div class="stab small"><svg width="20" height="20" viewBox="0 0 20 20"><path class="k w2" d="M4 18h10M9 18V8"/><path class="b w2" d="M4 8l10-5"/><circle class="g w2" cx="14" cy="9" r="3"/></svg></div>
    <div class="stab small"><svg width="20" height="20" viewBox="0 0 20 20"><path class="g" d="M4 2l12 4v12H4zM4 7h12M4 12h12M4 16h12M8 3v15M12 4v14"/><path class="fpk2" d="M4 2l12 4v3H4z"/></svg></div>
  </div>
</main>

<footer class="taskbar">
  <svg class="win" width="16" height="16" viewBox="0 0 16 16"><path class="fw" d="M0 2.300 6.500 1.400V7.500H0zM7.500 1.300 16 0V7.500H7.500zM0 8.500H6.500V14.600L0 13.700zM7.500 8.500H16V16L7.500 14.700z"/></svg>
  <span class="cort"></span>
  <div class="tk t-edge"><svg width="17" height="17" viewBox="0 0 17 17"><path class="edg" d="M3 9h12C15 4 12 2 8.500 2 5 2 2 5 2 9c0 4 3 6 7 6 2 0 4-.5 5-1.500"/></svg><span>【新提醒】NX11.0 ...</span></div>
  <div class="tk t-nx"><svg width="18" height="18" viewBox="0 0 18 18"><path class="fb" d="M2 6l6-4v13z"/><path class="fr" d="M8 1l6 3-4 7z"/><path class="fy" d="M4 11l8-5 3 4-6 6z"/></svg><span>NX 12 - 制图</span></div>
  <div class="tray">
    <span class="m-ic">M</span>
    <svg class="t-e" width="14" height="14" viewBox="0 0 14 14"><rect class="fteal" width="14" height="14" rx="4"/><text class="e-t" x="7" y="11">e</text></svg>
    <svg class="t-n" width="16" height="14" viewBox="0 0 16 14"><path class="wl" d="M4 2h11v8H4M1 1h3v8H1zM9 10v3M6 13h6"/></svg>
    <svg class="t-v" width="15" height="14" viewBox="0 0 15 14"><path class="wl" d="M1 5h2l3-3v10L3 9H1zM8 5c1 1 1 3 0 4M10 3c2 2 2 6 0 8"/></svg>
    <span class="clock">23:41</span>
    <svg class="t-c" width="16" height="16" viewBox="0 0 16 16"><path class="wl" d="M1 1h14v11H9l-2 3v-3H1z"/></svg>
  </div>
</footer>

<div class="wm">
  <svg width="72" height="82" viewBox="0 0 72 82">
    <path class="wm-a" d="M36 0 72 22V61L36 81 0 61V22Z"/>
    <path class="wm-c" d="M0 61 36 81 72 61 72 67 36 82 0 67Z"/>
    <path class="wm-w" d="M36 20 55 31V52L36 63 17 52V31Z"/>
    <path class="wm-b" d="M36 27 50 35 36 43 22 35Z"/>
    <path class="wm-d" d="M22 36 35 44V58L22 50Z"/>
    <path class="wm-e" d="M50 36 37 44V58L50 50Z"/>
  </svg>
  <div class="wm-t"><b>3D世界网</b><small>WWW.3DSJW.COM</small></div>
</div>
</body>
</html>
```
FILE: styles.css
```css
*{box-sizing:border-box}
html,body{margin:0;padding:0;width:1728px;height:972px;overflow:hidden}
body{background:#d8e3f1;font:11px "Noto Sans","Noto Sans CJK SC",sans-serif;color:#3a3f48;display:flex;flex-direction:column;position:relative}
.defs{position:absolute}
i{font-style:normal}

/* svg helpers */
.k{stroke:#222;fill:none}.r{stroke:#d4202e;fill:none}.b{stroke:#2c55c0;fill:none}.g{stroke:#8b8b8b;fill:none}
.n{stroke:#6d7ec4;fill:none}.nv{stroke:#2b2f7c;fill:none}.v{stroke:#9a2f86;fill:none}.t{stroke:#3b8f8c;fill:none}
.o,.or{stroke:#d98a16;fill:none}.gn{stroke:#1c9a3c;fill:none}.l{stroke:#7f93c0;fill:none}.br{stroke:#b22a2a;fill:none}
.g2{stroke:#8e9aa4;fill:none}.tl{stroke:#2a9d9a;fill:none}.rp{stroke:#b6848c;fill:none}
.chv{stroke:#777;stroke-width:1.200;fill:none}
.cr{stroke:#d81e2c;stroke-width:1.500;fill:none}
.cb2{stroke:#2438c8;stroke-width:1.500;fill:none}
.w2{stroke-width:1.6}.w3{stroke-width:2.4}.dsh{stroke-dasharray:2.500 1.500}.dsh2{stroke-dasharray:2.500 1.600}
.hat{stroke:#d4202e;stroke-width:1.500;fill:none}
.fw{fill:#fff}.fk{fill:#1c1c1c}.fk2{fill:#555}.fr{fill:#d4202e}.fb{fill:#2d5fd0}.fb2{fill:#2f6fd2}.fy{fill:#f5cf45}.fo{fill:#ee9322}.fo2{fill:#f8dc74}
.fl{fill:#dde6f4}.fl2{fill:#d8e2ee}.fg2{fill:#8c949c}.fg3{fill:#8a8f96}.fg4{fill:#d3d7dc}.fg5{fill:#c4dcd6}.fg6{fill:#8e9aa4}.fg7{fill:#b2ae72}.fg8{fill:#8aa0b4}.fg9{fill:#7c90a8}
.fp{fill:#c62cae}.fr2{fill:#f0a0a0}.fl2b{fill:#e0e6ee}.gnf{fill:#34b24a}.frp{fill:#b0848c}.ftl{fill:#2a9d9a}.ftl2{fill:#8cb4a8}.fpal{fill:#f3e2c8}.fpk{fill:#f0c0dc}.fpk2{fill:none}
.sk{stroke:#d98a16;stroke-width:.6}.sk2{stroke:#9a8a30;stroke-width:.6}
.it,.it2,.tiny,.nm,.nm2,.x-t,.txt10{font-family:"Liberation Sans",sans-serif;font-weight:700}
.it{font-size:8px}.it2{font-size:13px}.tiny{font-size:7.500px}.nm{font-size:6.500px}.nm2{font-size:8px;text-anchor:middle}
.x-t{font-size:15px;font-weight:400;text-anchor:middle}
.txt10{font-size:10px;fill:#222}
.r-t{fill:#d4202e}.k-t{fill:#222}.g-t{fill:#8b8b8b}.b-t{fill:#2230b8}.v-t{fill:#5a3fa8}
.bigA{font:700 20px "Liberation Serif",serif;fill:#111;text-anchor:middle}

/* title row */
.tabs{height:28px;display:flex;align-items:flex-start;flex:none;border-bottom:1px solid #b4c1d2;position:relative}
.filebtn{width:70px;height:27px;background:linear-gradient(#1d6fb4,#3e86c8 35%,#2a72b6 55%,#66aee6);color:#dbe7f3;text-align:center;line-height:26px;font-size:12px;flex:none;border-radius:0 2px 0 0}
.tablist{display:flex;margin-left:452px;height:28px;flex:none}
.tab{display:block;font-size:11.500px;line-height:25px;text-align:center;color:#3f4b5e;flex:none}
.tab.on{width:41px;height:28px;background:linear-gradient(#eef3fa,#f4f7fc);border:1px solid #c8d3e2;border-bottom:0;border-radius:2px 2px 0 0;margin-top:2px;line-height:22px}
.t1{width:48px}.t2{width:66px}.t3{width:45px}.t4{width:64px}
.tab.t1{margin-left:1px}
.tab.t2{margin-left:-1px}.t2+.t3{margin-left:-1px}.t3+.t3{margin-left:0}.t3+.t4{margin-left:1px}.t4+.t4{margin-left:5px}
.search{position:absolute;left:1444px;top:2px;width:130px;height:22px;background:#fff;border:1px solid #c5cfdc;display:flex;align-items:center;justify-content:space-between;padding:0 4px;color:#a9b2c0}
.fullbtn{position:absolute;left:1577px;top:1px;width:30px;height:25px;background:linear-gradient(#fde2a4,#f8c566);border:1px solid #dca84e;border-radius:2px;display:flex;align-items:center;justify-content:center}
.cupw{position:absolute;left:1614px;top:7px}.whitech{stroke:#fff;stroke-width:2.500;fill:none;filter:drop-shadow(0 0 1px #556)}
.help{position:absolute;left:1644px;top:3px}.helpq{font:700 15px "Liberation Sans",sans-serif;fill:#fff;text-anchor:middle}
.cap{position:absolute;left:1672px;top:6px}
.jc{position:absolute;left:1698px;top:5px;font-size:11px;color:#3a3f48}

/* ribbon */
.ribbon{height:61px;flex:none;display:flex;background:linear-gradient(#f6f8fc,#e4ebf5 50%,#d8e3f1);border-bottom:1px solid #b2bfd0}
.grp{flex:none;display:flex;flex-direction:column;border-right:1px solid #c3cfde;height:56px;margin-top:3px;margin-right:0}
.ics{display:grid;grid-template-rows:21px 21px;height:42px;margin-top:-3px;justify-items:center;align-items:center}
.ics svg{width:19px;height:19px;display:block;filter:blur(.3px)}
.ics svg.big{grid-row:span 2;width:24px;height:24px}
.ics svg.fa0{width:32px;height:32px}
.combo svg{width:10px;height:10px}
.blank{display:block}
.dd{display:block;width:0;height:0;border-left:3.500px solid transparent;border-right:3.500px solid transparent;border-top:4px solid #3c3c44}
.big-dd{grid-row:span 2}
.lbl{display:flex;align-items:center;height:15px;margin-top:1px;color:#75879e;padding-right:7px}
.lbl span{flex:1;text-align:center;white-space:nowrap}
.lbl .dd{border-top-color:#55606e}
.g-new{width:49px}.g-new .ics{grid-template-columns:26px 12px;padding-left:9px}
.g-view{width:133px}.g-view .ics{grid-template-columns:26px repeat(4,22.500px);padding-left:10px}
.g-dim{width:132px}.g-dim .ics{grid-template-columns:25px repeat(4,22.800px);padding-left:9px}
.g-note{width:240px}.g-note .ics{grid-template-columns:25px 30px repeat(6,22.300px) 12px 22px;padding-left:11px}
.g-sk{width:147px}.g-sk .ics{grid-template-columns:99px 22px 12px;padding-left:10px}
.combo{grid-row:span 2;width:97px;height:20px;justify-self:start;background:#e9edf3;border:1px solid #d3d9e1;color:#b5bcc8;padding:0 6px;display:flex;align-items:center;justify-content:space-between;font-size:12px;margin-top:2px}
.g-tb{width:110px}.g-tb .ics{grid-template-columns:repeat(4,22px) 12px;padding-left:8px}
.g-st{width:104px}.g-st .ics{grid-template-columns:repeat(4,22px);padding-left:8px}
.g-gc{width:578px}.g-gc .ics{grid-template-columns:repeat(13,29.750px) repeat(8,22.300px);padding-left:4px}
.g-fa{width:223px}.g-fa .ics{grid-template-columns:31px repeat(8,22.400px);padding-left:5px}
.g-end{flex:1;display:flex;align-items:flex-end;justify-content:center;padding-bottom:8px}

/* filter bar */
.filterbar{height:31px;flex:none;display:flex;align-items:center;padding-left:364px}
.menubtn{display:flex;align-items:center;width:58px;gap:2px;border-right:1px solid #c3cfde;height:24px;color:#56626f}
.menubtn .dd{margin-left:3px}
.sel{height:20px;background:#fff;border:1px solid #a9aeb5;color:#222;font-size:12px;display:flex;align-items:center;justify-content:space-between;padding:0 6px 0 3px;flex:none}
.s1{width:134px;margin-left:10px}.s2{width:140px;margin-left:7px}.s3{width:53px;margin-left:10px}
.fic{display:grid;grid-template-columns:27px 29px 32px 31px 28px 30px 27px 15px 29px 29px 30px 29px 30px 29px 31px 30px 29px 30px 30px 29px;margin-left:6px;justify-items:center;align-items:center;flex:none}
.fic svg{width:21px;height:21px;display:block;filter:blur(.3px)}
.fsep{width:1px;height:24px;background:#c3cfde;margin-left:6px;flex:none}
.fend{margin-left:auto;margin-right:5px;margin-top:12px}

/* main */
.work{flex:1;display:flex;min-height:0}
.left{width:1401px;flex:none;display:flex;flex-direction:column}
.docbar{height:20px;flex:none;border-bottom:2px solid #3d7f86}
.doctab{width:119px;height:18px;background:#4f9ea0;color:#dfe9ee;display:flex;align-items:center;padding-left:3px;gap:3px;font-size:11px;white-space:nowrap}
.docx{color:#9cc4c6;font-size:11px;margin-left:2px}
.whs{stroke:#eef;fill:none}
.canvas{flex:1;background:#000;position:relative;border-left:1px solid #9a9a9a;border-bottom:1px solid #a8a8a8;overflow:hidden}
.draw{display:block;position:absolute;left:-1px;top:0}
.frame{stroke:#b8487a;stroke-width:1.500;stroke-dasharray:1.500 1.500;fill:none}
.ext{stroke:#7d7a9f;stroke-width:1.400;fill:none}
.part,.ring-g{stroke:#6f9186;stroke-width:1.300;fill:none}
.dash1{stroke:#1c7fc6;stroke-width:1.300;stroke-dasharray:8 4;fill:none}
.dash2{stroke:#1c7fc6;stroke-width:1.200;stroke-dasharray:3 16;fill:none}
.ring-b{stroke:#33a0e4;stroke-width:1.400;fill:none}
.ring-y{stroke:#d6d21e;stroke-width:1.500;stroke-dasharray:12 18;fill:none}
.cl{stroke:#2f8fd8;stroke-width:1.300;fill:none}
.lead{stroke:#807aa6;stroke-width:1.300;fill:none}
.ahead{fill:#807aa6}
.gr text,.go text,.bl text,.gry{font:400 21px "Liberation Mono",monospace;stroke:#000;stroke-width:.3;paint-order:fill}
.gr text{fill:#00c40c}
.go text{fill:#c9ad52}
.bl text{fill:#0c0cdc}
.gr .dia,.bl .dia{font:400 24px "Liberation Sans",sans-serif}
.bsym{stroke:#0a0ac2;stroke-width:1.400;fill:none}
.gry{fill:#8a7e90}
.hi{stroke:#e57fa6;stroke-width:3.500}
.hi2{stroke:#f4cfe0;stroke-width:1.500}
.pinksq{fill:#ea6fa4}
.bluesq{fill:#0c9bff}
.plink{stroke:#b04f85;stroke-width:1.200}
.axis{stroke:#0c9bff;stroke-width:3;fill:none}
.axh{fill:#0c9bff}
.sheetname{position:absolute;left:9px;bottom:3px;color:#b4b4b4;font-size:11px}

/* dialog */
.dlg{position:absolute;left:0;top:0;width:295px;height:427px;background:#f0f0f0;display:flex;flex-direction:column;border-right:1px solid #999}
.dlg-title{height:25px;flex:none;background:linear-gradient(#7ea3c4,#a6bfd8 50%,#bfd0e2);display:flex;align-items:center;padding-left:7px;gap:8px;color:#1f2f3e;font-size:12px;margin-bottom:3px}
.gear{stroke:#fff;stroke-width:2.500;fill:none;stroke-dasharray:2 1}
.gear2{stroke:#fff;fill:none}
.dlg-title span{flex:1}
.dlg-x{width:21px;height:19px;margin-right:3px;background:linear-gradient(#e0807c,#b93a34);color:#fff;font-size:12px;font-weight:700;padding:0;border:1px solid #7f3f3f;border-radius:2px;line-height:16px;font-family:"Liberation Sans",sans-serif}
.sec-h{height:18px;flex:none;margin:0 5px;background:linear-gradient(#f8f9fb,#eaecf0);display:flex;align-items:center;justify-content:space-between;padding:0 10px 0 11px;color:#4e5a6a}
.sec-b{margin:0 8px 4px;background:#e6e6ed;flex:none;padding:5px 5px;font-size:11px;color:#333}
.b-ref{height:69px;padding:3px 5px 0 7px}.b-base{height:79px}.b-org{height:59px}.b-marg{height:38px;padding-top:6px}
.d-row{display:flex;align-items:center;gap:5px}
.grow{flex:1}
.c13{flex:none;margin-right:-2px}
.h31{height:31px;justify-content:flex-end}
.h29{height:29px}.h28{height:28px}
.tbtn{display:flex;align-items:center;justify-content:center;background:#e3e3e6;border:1px solid #b9b9bd;flex:none}
.tbtn.m{width:20px;height:20px}
.tbtn.l{width:27px;height:27px}
.b-marg .tbtn.l{margin-top:-2px}
.tbtn.split{width:45px;height:28px;gap:7px;border-radius:3px;border-width:2px;border-color:#cfd0d4;margin-left:-3px;margin-right:-1px}
.ck{display:flex;align-items:center;height:20px;gap:5px;position:relative;top:1px}
.bx{width:12px;height:12px;border:1px solid #6f6f6f;background:#fff;position:relative;flex:none}
.bx.on::after{content:"";position:absolute;left:2px;top:0;width:5px;height:8px;border:solid #444;border-width:0 1px 1px 0;transform:rotate(40deg)}
.ck.off{color:#b5b5bb}.ck.off .bx{border-color:#d8d8dc}
.hl{height:29px;gap:3px}
.pickbar{flex:none;width:237px;height:28px;background:linear-gradient(90deg,#fb9a06,#f9a62c 30%,#ecc98c 70%,#e7e3dd);border-radius:5px 0 0 5px;display:flex;align-items:center;gap:2px;padding-left:2px;color:#222}
.tbtn.pick{width:29px;height:27px;background:#fbd487;border-color:#e2b55d;border-radius:2px}
.pick-x{font:700 10px "Liberation Sans",sans-serif;fill:#222}
.dlg-foot{margin:4px 6px 0;height:29px;border-top:1px solid #bdbdbd;display:flex;justify-content:flex-end;padding:4px 9px 0 0;flex:none}
.closebtn{width:46px;height:22px;background:#e6e6e6;border:2px solid #1c7fcf;font:11.500px "Noto Sans CJK SC",sans-serif;color:#333;padding:0}
.dlg-grip{margin-top:5px;height:9px;background:linear-gradient(#f4f4f4,#b9bcc2);position:relative}
.dlg-grip::after{content:"";position:absolute;left:98px;top:1px;width:98px;height:6px;background:repeating-linear-gradient(90deg,#a8a8a8 0 1px,transparent 1px 3px)}

/* text box */
.tbox{position:absolute;left:59px;top:684px;width:203px;height:116px;background:#e6e6ec;border:1px solid #c8c8d0;display:flex}
.grip{width:11px;flex:none;background:repeating-linear-gradient(#c6c6cc 0 1px,transparent 1px 3px)}
.tb-main{flex:1;padding:4px 3px 0 5px;display:flex;flex-direction:column;gap:1px}
.tb-r1{display:flex;height:23px;gap:5px;align-items:center}
.tcmb{display:flex;width:40px;height:23px;background:#fff;border:1px solid #bcbcc2;font-size:12px;flex:none}
.tcmb b{flex:1;display:flex;align-items:center;justify-content:center;font:400 12px "Liberation Sans",sans-serif;color:#111}
.tcmb i{width:15px;background:#d5d5d8;display:flex;align-items:center;justify-content:center}
.tbtn.t20{width:20px;height:20px}
.x-s{font:400 11px "Liberation Sans",sans-serif;fill:#222;text-anchor:middle}
.a-s{font:700 13px "Liberation Serif",serif;fill:#111;text-anchor:middle}
.a-x1{font:700 9px "Liberation Sans",sans-serif;fill:#222}
.a-x2{font:italic 700 11px "Liberation Sans",sans-serif;fill:#2230b8}
.tinput{height:20px;background:#fff;border:1px solid #c3c3c8;flex:none;margin-left:1px}
.tb-r3{display:flex;height:20px;align-items:center}
.w64{width:64px;margin-left:1px}.w64b{width:64px;margin-left:9px}
.prec{width:31px;color:#333;font:12px "Noto Sans",sans-serif;text-align:center}
.ddbtn{width:12px;height:20px;background:#d5d5d8;display:flex;align-items:center;justify-content:center;border:1px solid #bcbcc2}
.tb-r5{display:flex;justify-content:space-between;align-items:center;height:21px;padding-right:1px}

/* navigator */
.nav{width:298px;flex:none;background:#d7e3f3;display:flex;flex-direction:column;padding:0 6px 0 9px;margin-left:0}
.nav-head{height:35px;flex:none;display:flex;align-items:center;gap:10px;padding:8px 0 0 4px;font-size:11px;color:#2f3a46}
.nv-box{width:13px;height:11px;border:1px solid #222;border-top-width:2px;background:#f4f6f8}
.tree{height:431px;flex:none;background:#fff;border:1px solid #b6bcc4;display:flex;flex-direction:column;position:relative}
.tree-cols{height:19px;flex:none;display:grid;grid-template-columns:180px 90px 1fr;color:#333;line-height:19px}
.tc1{padding-left:5px;border-right:1px solid #eef0f3}.tc2{padding-left:5px;border-right:1px solid #eef0f3}.tc3{padding-left:5px;overflow:hidden}
.up{display:inline-block;width:0;height:0;border-left:3px solid transparent;border-right:3px solid transparent;border-bottom:4px solid #b2b6bc;margin:0 0 2px 10px}
.rows{flex:1;position:relative;font-size:11px;color:#444}
.row{height:16.200px;display:grid;grid-template-columns:180px 1fr;align-items:center;position:relative}
.row .nm-c{display:flex;align-items:center;white-space:nowrap}
.lt{padding-left:5px;display:flex;align-items:center}.lt svg{display:block}
.ck14,.cb12,.ic{flex:none;display:block}
.ic{margin-right:2px}
.i0{padding-left:5px}.i1{padding-left:22px}.i2{padding-left:42px}.i3{padding-left:26px}.i4{padding-left:26px}
.ex{width:9px;height:9px;border:1px solid #a8adb4;font:9px/7px "Liberation Sans",sans-serif;color:#555;text-align:center;margin-right:4px;background:#fdfdfd;flex:none}
.ex2{margin-right:2px}
.dh{width:10px;border-bottom:1px dotted #9a9a9a;flex:none}
.i2 .dh{width:9px}
.i4 .dh{width:9px}
.i4 .cb12{margin-right:2px}
.i4 .ic{margin-right:3px}
.qm{font:700 13px "Liberation Sans",sans-serif;color:#d8c11e;width:12px;text-align:center;text-shadow:0 0 1px #8a7a10;flex:none}
.row.dim{color:#b3b6bc}
.row.bold{font-weight:700;color:#222}
.chkp{fill:none;stroke:#22b23a;stroke-width:2.800}
.chkt{fill:none;stroke:#0f9a2c;stroke-width:1.800}
.vd{position:absolute;border-left:1px dotted #a4a4a4;display:block}
.v1{left:26px;top:24px;height:49px}.v2{left:42px;top:24px;height:33px}.v3{left:26px;top:106px;height:114px}
.w-l{stroke:#dfe8f4;fill:none}
.hscroll{height:16px;flex:none;margin-top:auto;background:#f0f0f0;display:flex;align-items:center;border-top:1px solid #e4e4e4}
.sa{width:15px;text-align:center;font:700 14px/14px "Liberation Sans",sans-serif;color:#555;flex:none}
.track{flex:1;height:14px}.thumb{width:195px;height:14px;background:#cdcdcd}
.resz{height:7px;flex:none;position:relative;background:#dbe8f8}
.resz::after{content:"";position:absolute;left:97px;top:3px;width:92px;height:2px;background:repeating-linear-gradient(90deg,#9aa3ae 0 1px,transparent 1px 4px)}
.nav-sec{flex:none;display:flex;align-items:center;justify-content:space-between;padding:0 9px 0 10px;background:linear-gradient(#f6f7fa,#e9ebef);color:#4e5a6a;font-size:11.500px}
.s-rel{height:19px;margin-bottom:3px}
.s-det{height:26px;padding-bottom:2px}
.s-pre{height:20px}
.detail{height:272px;flex:none;background:#e4e5ea;padding:5px 4px 4px;margin-bottom:2px}
.dt{height:263px;background:#fff;border:1px solid #b9bcc2}
.dt-h{display:grid;grid-template-columns:58px 36px 79px;height:19px;color:#333;line-height:19px}
.dt-h span{border-right:2px solid #eef0f3;padding-left:6px}
.dt-h .d2{padding-left:5px}.dt-h .d3{padding-left:6px}
.side{flex:1;background:#bfc9dc;display:flex;flex-direction:column;align-items:flex-end;position:relative}
.sgear{margin:5px 6px 0 0;flex:none}
.gear3{stroke:#2b2f36;stroke-width:1.800;fill:none}.gear3b{stroke:#2b2f36;fill:none}
.stab{width:25px;margin-right:3px;height:37px;background:#fff;display:flex;align-items:center;justify-content:center;flex:none;margin-top:1px}
.sgear+.stab{margin-top:18px}
.stab.act{background:#e9eef6;height:39px;margin-top:1px}
.stab.gap{margin-top:10px}
.stab.small{height:32px;margin-top:4px;background:#bfc9dc}
.stab.small+.stab.small{margin-top:6px}
.itxt{font:700 12px "Liberation Serif",serif;fill:#fff;text-anchor:middle}
.bl-s{stroke:#2f6fd2;stroke-width:2.400;fill:none}
.tl-r{stroke:#2ea86a;stroke-width:3.500;fill:none}
.clk{fill:#eef0f2;stroke:#7a8290;stroke-width:2.400}

/* taskbar */
.taskbar{height:27px;flex:none;display:flex;align-items:center;background:linear-gradient(90deg,#8f1e55,#7d1449 30%,#6a0d3d 70%,#680c3b);color:#e9dce4;position:relative;font-size:12px}
.win{margin-left:8px;flex:none}
.cort{width:14px;height:14px;border:2px solid #fff;border-radius:50%;margin-left:17px;flex:none}
.tk{height:27px;display:flex;align-items:center;flex:none;border-bottom:2px solid #ef9fbd;white-space:nowrap}
.t-edge{width:137px;margin-left:16px;padding-left:3px;gap:5px}
.edg{stroke:#2f8fe0;stroke-width:3;fill:none}
.t-nx{width:141px;margin-left:7px;padding:11px 0 0 5px;background:linear-gradient(transparent 11px,#a90c4d 11px);gap:5px}
.t-nx svg{margin-top:-9px;flex:none}
.t-nx span{margin-top:-10px}
.tray{margin-left:auto;display:flex;align-items:center;height:27px}
.m-ic{width:13px;height:13px;background:#fff;color:#111;font:700 11px/13px "Liberation Sans",sans-serif;text-align:center;margin-right:23px}
.fteal{fill:#19a5a5}.e-t{font:700 11px "Liberation Sans",sans-serif;fill:#fff;text-anchor:middle}
.t-e{margin-right:8px}.t-n{margin-right:5px}.t-v{margin-right:10px}
.wl{stroke:#f0e4ea;fill:none}
.clock{font-size:12px;margin-right:13px;color:#f0e6ec}
.t-c{margin-right:22px}

/* watermark */
.wm{position:absolute;left:1445px;top:877px;display:flex;gap:10px;pointer-events:none;align-items:flex-start}
.wm-a{fill:#9fd8f6;opacity:.9}
.wm-c{fill:#2b5e9e}
.wm-w{fill:#e5f4fc}
.wm-b{fill:#d7effb}.wm-d{fill:#a6dcf6}.wm-e{fill:#6fc0ea}
.wm-t{display:flex;flex-direction:column;color:rgba(255,255,255,.42);margin-top:12px;margin-left:-1px;white-space:nowrap}
.wm-t b{font:700 40px "Noto Sans CJK SC",sans-serif;line-height:40px;letter-spacing:2px}
.wm-t small{font:400 11px "Liberation Sans",sans-serif;letter-spacing:5.300px;margin-top:6px}
```
